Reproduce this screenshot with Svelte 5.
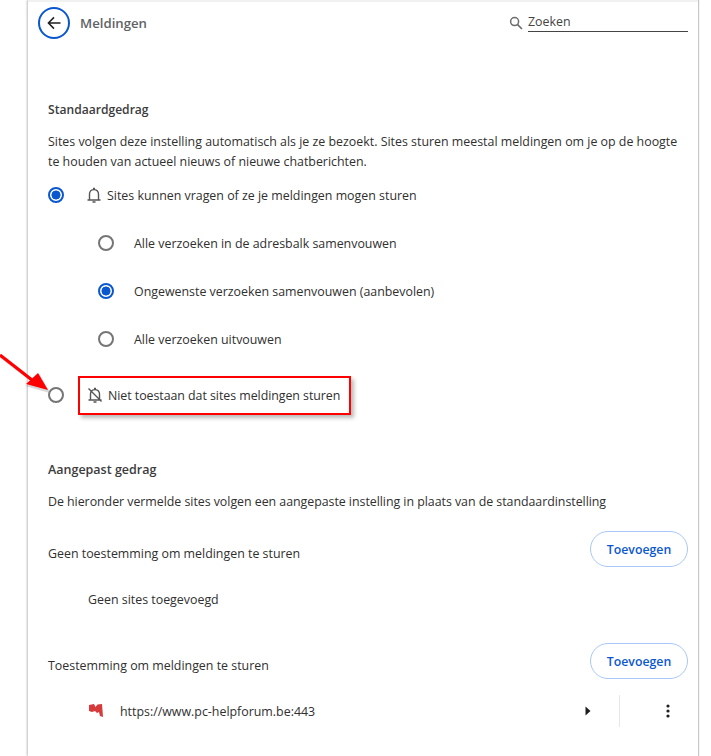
<script>
  const sub = [
    { label: 'Alle verzoeken in de adresbalk samenvouwen', on: false },
    { label: 'Ongewenste verzoeken samenvouwen (aanbevolen)', on: true },
    { label: 'Alle verzoeken uitvouwen', on: false }
  ];
</script>

<div class="page">
  <main class="card">
    <header class="top">
      <button class="back" aria-label="Terug">
        <svg width="16" height="16" viewBox="0 0 16 16"><path d="M14.5 8H2.5M8 2.4 2.4 8 8 13.6" fill="none" stroke="#1f1f1f" stroke-width="1.5"/></svg>
      </button>
      <h1>Meldingen</h1>
      <div class="search">
        <svg width="14" height="14" viewBox="0 0 14 14"><circle cx="5.6" cy="5.6" r="4" fill="none" stroke="#6b6b6b" stroke-width="1.5"/><path d="M8.6 8.6 13 13" stroke="#6b6b6b" stroke-width="1.6"/></svg>
        <span class="field">Zoeken</span>
      </div>
    </header>

    <section class="default">
      <h2>Standaardgedrag</h2>
      <p class="desc">Sites volgen deze instelling automatisch als je ze bezoekt. Sites sturen meestal meldingen om je op de hoogte te houden van actueel nieuws of nieuwe chatberichten.</p>

      <div class="opt main first">
        <span class="radio on"></span>
        <svg class="bell" width="16" height="16" viewBox="0 0 16 16"><path d="M1.5 13h13M3.5 13V7a4.5 4.5 0 0 1 9 0v6M6.5 15h3M7 1.5h2" fill="none" stroke="#555" stroke-width="1.4"/></svg>
        <span>Sites kunnen vragen of ze je meldingen mogen sturen</span>
      </div>

      <div class="subs">
        {#each sub as s}
          <div class="opt sub">
            <span class="radio" class:on={s.on}></span>
            <span>{s.label}</span>
          </div>
        {/each}
      </div>

      <div class="opt main last">
        <span class="radio"></span>
        <span class="mark">
          <svg class="bell" width="16" height="16" viewBox="0 0 16 16"><path d="M1.5 13h13M3.5 13V7a4.5 4.5 0 0 1 9 0v6M6.5 15h3M7 1.5h2M1.5 1.5l13 13" fill="none" stroke="#555" stroke-width="1.4"/></svg>
          <span class="tight">Niet toestaan dat sites meldingen sturen</span>
        </span>
      </div>
    </section>

    <section class="custom">
      <h2 class="wide">Aangepast gedrag</h2>
      <p class="note">De hieronder vermelde sites volgen een aangepaste instelling in plaats van de standaardinstelling</p>

      <div class="head-row block">
        <span class="label">Geen toestemming om meldingen te sturen</span>
        <button class="add">Toevoegen</button>
      </div>
      <div class="empty">Geen sites toegevoegd</div>

      <div class="head-row allow">
        <span class="label">Toestemming om meldingen te sturen</span>
        <button class="add">Toevoegen</button>
      </div>
      <div class="site">
        <svg class="fav" width="16" height="16" viewBox="0 0 16 16"><path d="M1 2 6 1l1.5 3 2-2.5L14 1l1 13-3-1-1-4-2 1-2-2-3 1-3-1z" fill="#d63a3a"/></svg>
        <span class="url">https://www.pc-helpforum.be:443</span>
        <svg class="caret" width="6" height="10" viewBox="0 0 6 10"><path d="M0.5 0.5 5.5 5 0.5 9.5z" fill="#1f1f1f"/></svg>
        <span class="sep"></span>
        <svg class="dots" width="4" height="14" viewBox="0 0 4 14"><circle cx="2" cy="2" r="1.6"/><circle cx="2" cy="7" r="1.6"/><circle cx="2" cy="12" r="1.6"/></svg>
      </div>
    </section>
  </main>

  <svg class="arrow" width="52" height="46" viewBox="0 0 52 46">
    <path d="M0 4 32 28M49 39 27 33 39 22z" fill="#888" stroke="#999" stroke-width="1.5" opacity=".35"/>
    <path d="M0 2 32 27" stroke="#f00" stroke-width="3.2"/>
    <path d="M48 37 26 31 38 20z" fill="#f00"/>
  </svg>
</div>

<style>
  :global(body) {
    margin: 0;
    background: #fff;
  }
  .page {
    position: relative;
    width: 711px;
    height: 756px;
    overflow: hidden;
    font-family: "Open Sans", "Noto Sans", sans-serif;
    font-size: 12.4px;
    color: #1f1f1f;
  }
  .card {
    box-sizing: border-box;
    width: 670px;
    height: 756px;
    margin-left: 28px;
    padding-top: 1px;
    background: #fff;
    border-top: 2px solid #f1f1f1;
    box-shadow: -1px 0 2px #bdbdbd, 1px 0 1px #c8c8c8;
  }
  .top {
    display: flex;
    align-items: center;
    height: 40px;
    padding: 0 10px;
  }
  .back {
    width: 32px;
    height: 32px;
    padding: 0;
    display: flex;
    align-items: center;
    justify-content: center;
    background: #fff;
    border: 2px solid #0b57d0;
    border-radius: 50%;
  }
  h1 {
    margin: 0 0 0 10px;
    font-size: 13.2px;
    font-weight: 600;
    color: #5f6368;
  }
  .search {
    display: flex;
    align-items: center;
    gap: 5px;
    margin-left: auto;
  }
  .field {
    width: 160px;
    height: 17px;
    line-height: 16px;
    color: #444;
    border-bottom: 1px solid #444;
  }
  .default {
    padding: 0 20px;
    margin-top: 57px;
  }
  h2 {
    margin: 0;
    font-size: 12.1px;
    line-height: 20px;
    font-weight: 600;
    color: #3c3c3c;
  }
  h2.wide {
    font-size: 12.5px;
  }
  .desc {
    margin: 12px 0 0;
    line-height: 20px;
    color: #303030;
  }
  .opt {
    display: flex;
    align-items: center;
    color: #303030;
  }
  .radio {
    box-sizing: border-box;
    flex: none;
    width: 16px;
    height: 16px;
    border: 2px solid #757575;
    border-radius: 50%;
  }
  .radio.on {
    border-color: #0b57d0;
    background: radial-gradient(circle, #0b57d0 0 4.2px, #fff 4.8px);
  }
  .main.first {
    height: 20px;
    margin-top: 13px;
  }
  .main .radio {
    margin-right: 22px;
  }
  .bell {
    flex: none;
    margin-right: 5px;
  }
  .subs {
    margin-top: 14px;
  }
  .sub {
    height: 48px;
    padding-left: 50px;
  }
  .sub .radio {
    margin-right: 20px;
  }
  .main.last {
    height: 40px;
    margin-top: 12px;
  }
  .main.last .radio {
    margin-right: 14px;
  }
  .mark {
    box-sizing: border-box;
    display: flex;
    align-items: center;
    height: 39px;
    padding: 0 9px 0 7px;
    border: 2px solid #f00;
    box-shadow: 3px 3px 4px #bbb;
    background: #fff;
  }
  .tight {
    letter-spacing: -0.05px;
  }
  .custom {
    padding: 0 10px 0 20px;
    margin-top: 45px;
  }
  .note {
    margin: 12px 0 0;
    line-height: 20px;
    color: #303030;
    letter-spacing: -0.04px;
  }
  .head-row {
    display: flex;
    justify-content: space-between;
    height: 36px;
    color: #303030;
  }
  .label {
    padding-top: 13px;
    line-height: 20px;
  }
  .block {
    margin-top: 19px;
  }
  .add {
    box-sizing: border-box;
    width: 98px;
    height: 36px;
    padding: 0;
    background: #fff;
    border: 1px solid #a8c7fa;
    border-radius: 18px;
    color: #0b57d0;
    font: 600 12.3px "Open Sans", "Noto Sans", sans-serif;
  }
  .empty {
    padding-left: 40px;
    height: 40px;
    line-height: 38px;
    margin-top: 14px;
    color: #303030;
  }
  .allow {
    margin-top: 22px;
  }
  .site {
    display: flex;
    align-items: center;
    height: 48px;
    padding-left: 40px;
    margin-top: 8px;
  }
  .fav {
    margin-right: 16px;
  }
  .url {
    color: #303030;
  }
  .caret {
    margin-left: auto;
  }
  .sep {
    width: 1px;
    height: 32px;
    margin: 0 46px 0 28px;
    background: #e6e6e6;
  }
  .dots {
    margin-right: 18px;
    fill: #1f1f1f;
  }
  .arrow {
    position: absolute;
    left: 0;
    top: 353px;
  }
</style>
